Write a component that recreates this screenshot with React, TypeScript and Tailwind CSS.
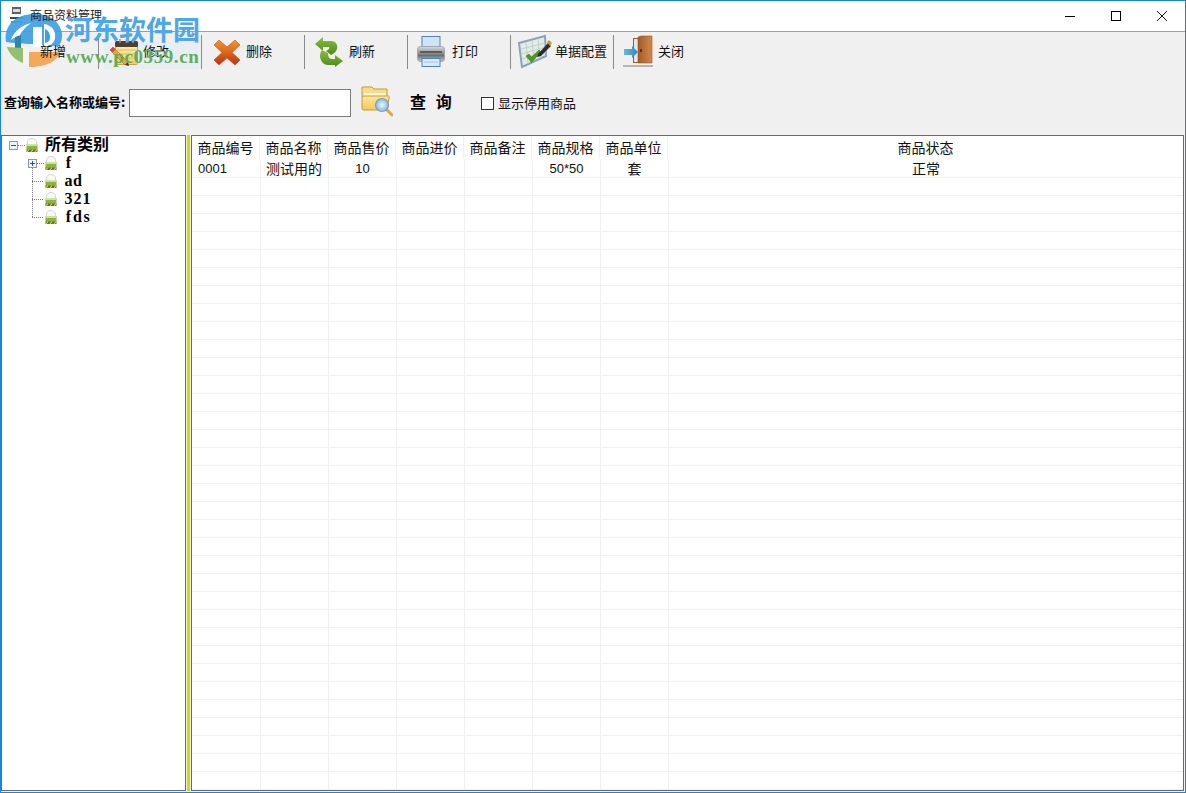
import React from "react";

const cjk = '"Noto Sans CJK SC", "Liberation Sans", sans-serif';
const digits = '"Liberation Sans", sans-serif';

function EditIcon() {
  return (
    <svg width="44" height="40" viewBox="0 0 44 40">
      <defs>
        <linearGradient id="pad" x1="0" y1="0" x2="0" y2="1">
          <stop offset="0" stopColor="#fdeeaa" />
          <stop offset="1" stopColor="#f5d272" />
        </linearGradient>
      </defs>
      <rect x="16.500" y="10.500" width="22" height="22" rx="1" fill="url(#pad)" stroke="#c9a24a" />
      <g stroke="#e2bf62" strokeWidth="1">
        <path d="M18 18H37M18 22H37M18 26H37M18 30H37" />
      </g>
      <rect x="16" y="9" width="23" height="6" rx="1.500" fill="#4a4038" />
      <path d="M21 7v4M27.500 7v4M34 7v4" stroke="#9a9286" strokeWidth="1.500" />
      <path d="M11 18l3-3 15 15-3 3z" fill="#eba53f" stroke="#a76a20" strokeWidth=".6" />
      <path d="M11 18l3-3 2.500 2.500-3 3z" fill="#d9453a" />
      <path d="M26 33l3-3 1 4z" fill="#3a3a3a" />
    </svg>
  );
}

function DeleteIcon() {
  return (
    <svg width="44" height="40" viewBox="0 0 44 40">
      <defs>
        <linearGradient id="x" x1="0" y1="0" x2="0" y2="1">
          <stop offset="0" stopColor="#f19a2c" />
          <stop offset="1" stopColor="#c1300f" />
        </linearGradient>
      </defs>
      <path
        d="M12 13l5-5 8 7 8-7 5 5-8 7.500 8 7.500-5 5-8-7-8 7-5-5 8-7.500z"
        fill="url(#x)"
        stroke="#c2481a"
        strokeWidth=".6"
        strokeLinejoin="round"
      />
    </svg>
  );
}

function RefreshIcon() {
  return (
    <svg width="44" height="40" viewBox="0 0 44 40">
      <defs>
        <linearGradient id="r" x1="0" y1="0" x2="0" y2="1">
          <stop offset="0" stopColor="#8dbd3c" />
          <stop offset="1" stopColor="#4e8a1c" />
        </linearGradient>
      </defs>
      <path d="M10 12L18 5V9H26C31 9 33 13 32 17C31 20 29 21 26 23L21 19C24 18 25 16 24 15H18V19Z" fill="url(#r)" />
      <path d="M17 18L23 21C23 24 24 27 27 27H30V23L38 29L30 35V33H23C18 33 15 28 15 24C15 21 16 19 17 18Z" fill="url(#r)" />
    </svg>
  );
}

function PrintIcon() {
  return (
    <svg width="44" height="40" viewBox="0 0 44 40">
      <defs>
        <linearGradient id="p" x1="0" y1="0" x2="0" y2="1">
          <stop offset="0" stopColor="#dcdcdc" />
          <stop offset=".45" stopColor="#8e9194" />
          <stop offset=".6" stopColor="#6d7073" />
          <stop offset="1" stopColor="#c9c9c9" />
        </linearGradient>
      </defs>
      <rect x="14" y="4.500" width="18" height="13" fill="#cfe5f7" stroke="#4f86b8" />
      <rect x="9.500" y="14.500" width="27" height="15" rx="3" fill="url(#p)" stroke="#a5a5a5" />
      <rect x="12" y="19" width="22" height="2" fill="#5b5e61" />
      <rect x="14" y="26.500" width="18" height="8" fill="#d8eafa" stroke="#4f86b8" />
      <path d="M16 30h14" stroke="#a9c9e6" />
    </svg>
  );
}

function ConfigIcon() {
  return (
    <svg width="44" height="40" viewBox="0 0 44 40">
      <path d="M8 11L34 4L35 24L11 35Z" fill="#e3ebe6" stroke="#8ba2b8" strokeWidth="2" />
      <g stroke="#bcc9c2" strokeWidth=".8">
        <path d="M10 17l24-6M10 22l25-7M11 27l24-7" />
        <path d="M15 10l2 22M21 8l2 21M27 6l2 21" />
      </g>
      <path d="M15 24l3-2 2.500 3 7.500-7 2 2-9.500 10.500z" fill="#4f9a1f" stroke="#2f7412" strokeWidth=".5" />
      <path d="M27 22l10-11 3 3-10 10-4 1z" fill="#2c2c2c" />
      <path d="M36 10l2-2 3 3-2 3z" fill="#c2a02a" />
    </svg>
  );
}

function DoorIcon() {
  return (
    <svg width="44" height="40" viewBox="0 0 44 40">
      <defs>
        <linearGradient id="d" x1="0" y1="0" x2="1" y2="0">
          <stop offset="0" stopColor="#a65a25" />
          <stop offset="1" stopColor="#d08a50" />
        </linearGradient>
        <linearGradient id="a" x1="0" y1="0" x2="1" y2="0">
          <stop offset="0" stopColor="#6cb7dc" />
          <stop offset="1" stopColor="#2f86b9" />
        </linearGradient>
      </defs>
      <rect x="19.500" y="6.500" width="6" height="24" fill="#e4e8ea" stroke="#9a5a2b" />
      <path d="M24 5l3-1h11v27H24z" fill="url(#d)" stroke="#9a5526" strokeWidth=".6" />
      <rect x="26" y="17" width="2" height="3" fill="#5a3418" />
      <path d="M10 17h8v-3l6 6-6 6v-3h-8z" fill="url(#a)" />
      <rect x="9" y="33" width="30" height="2" fill="#b8b4ae" />
    </svg>
  );
}

function FolderSearchIcon() {
  return (
    <svg width="32" height="32" viewBox="0 0 32 32">
      <defs>
        <linearGradient id="f" x1="0" y1="0" x2="0" y2="1">
          <stop offset="0" stopColor="#fde79b" />
          <stop offset="1" stopColor="#f3c75f" />
        </linearGradient>
        <radialGradient id="g">
          <stop offset="0" stopColor="#eaf6fd" />
          <stop offset="1" stopColor="#7dbbe6" />
        </radialGradient>
      </defs>
      <path d="M1 2h10l2 2h13v8H1z" fill="#f8dc88" stroke="#c99a3c" />
      <path d="M3 8h22v4H3z" fill="#fff8dc" />
      <path d="M1 24V13c0-1 1-2 2-2h24c1 0 2 1 1 2l-2 12H2z" fill="url(#f)" stroke="#c99a3c" />
      <path d="M26 25l5 5" stroke="#e8a33c" strokeWidth="3" strokeLinecap="round" />
      <circle cx="21" cy="20" r="6.500" fill="url(#g)" stroke="#8a9aa6" strokeWidth="1.200" />
    </svg>
  );
}

function TreeGlyph({ x }: { x: number }) {
  return (
    <g transform={`translate(${x} 2)`}>
      <path d="M1.500 7V4c0-2 2-3.500 4.500-3.500S10.500 2 10.500 4v3" fill="#fafafa" stroke="#d4d4d4" />
      <rect x="0.500" y="6" width="11" height="6" fill="#86b83f" />
      <rect x="0.500" y="6" width="11" height="2" fill="#cfe29a" />
      <rect x="0.500" y="11.500" width="11" height="2.500" fill="#6b6a28" />
      <path d="M1 14l2-2.500M5 14l2-2.500M9 14l2-2.500" stroke="#e2d24f" strokeWidth="1.200" />
    </g>
  );
}

function BoxMark({ x, y, plus }: { x: number; y: number; plus?: boolean }) {
  return (
    <g>
      <rect x={x + 0.5} y={y + 0.5} width="8" height="8" fill="#f2f4f6" stroke="#8a9aa8" />
      <path d={`M${x + 2} ${y + 4.5}h5`} stroke="#32508a" />
      {plus && <path d={`M${x + 4.5} ${y + 2}v5`} stroke="#32508a" />}
    </g>
  );
}

function TreeRoot() {
  return (
    <div className="flex h-[18px] items-center">
      <svg width="43" height="18" viewBox="0 0 43 18" className="shrink-0">
        <BoxMark x={7} y={5} />
        <path d="M16 9.500h8" stroke="#777" strokeDasharray="1 1" />
        <TreeGlyph x={24} />
      </svg>
      <span className="mb-[4px] text-[16px] leading-none font-bold text-black" style={{ fontFamily: cjk }}>
        所有类别
      </span>
    </div>
  );
}

function TreeChild({ label, first, last }: { label: string; first?: boolean; last?: boolean }) {
  const vertical = first ? "M30.500 14V18" : last ? "M30.500 0V9.500" : "M30.500 0V18";
  return (
    <div className="flex h-[18px] items-center">
      <svg width="62" height="18" viewBox="0 0 62 18" className="shrink-0">
        <path d={vertical} stroke="#777" strokeDasharray="1 1" />
        <path d={first ? "M35 9.500h7" : "M30 9.500h12"} stroke="#777" strokeDasharray="1 1" />
        {first && <BoxMark x={26} y={5} plus />}
        <TreeGlyph x={43} />
      </svg>
      <span className="flex text-[16px] leading-none font-bold text-black" style={{ fontFamily: '"Liberation Serif", serif' }}>
        {label.split("").map((ch, i) => (
          <span key={i} className="w-[9px] text-center">
            {ch}
          </span>
        ))}
      </span>
    </div>
  );
}

const toolbar: { label: string; icon: React.ReactNode }[] = [
  { label: "修改", icon: <EditIcon /> },
  { label: "删除", icon: <DeleteIcon /> },
  { label: "刷新", icon: <RefreshIcon /> },
  { label: "打印", icon: <PrintIcon /> },
  { label: "单据配置", icon: <ConfigIcon /> },
  { label: "关闭", icon: <DoorIcon /> },
];

const headers = ["商品编号", "商品名称", "商品售价", "商品进价", "商品备注", "商品规格", "商品单位"];

function Cell({ children, align, font }: { children?: React.ReactNode; align?: string; font?: string }) {
  return (
    <div
      className={`flex h-full w-[68px] shrink-0 items-center border-r border-[#f0f0f0] text-[14px] leading-none text-[#111] first:w-[69px] ${align ?? "justify-center"}`}
      style={{ fontFamily: font ?? cjk }}
    >
      {children}
    </div>
  );
}

function BlankRow() {
  return (
    <div className="flex h-[18px] shrink-0 border-b border-[#f0f0f0]">
      {[0, 1, 2, 3, 4, 5, 6].map((c) => (
        <Cell key={c} />
      ))}
      <div className="flex-1" />
    </div>
  );
}

export default function App() {
  return (
    <div
      className="relative flex h-[793px] w-[1186px] flex-col overflow-hidden border border-[#1b86d8] bg-[#f0f0f0] text-black"
      style={{ fontFamily: cjk }}
    >
      {/* title bar */}
      <div className="flex h-[31px] shrink-0 items-center border-b border-[#a0a0a0] bg-white">
        <svg width="14" height="18" viewBox="0 0 14 18" className="ml-[9px]">
          <rect x="2" y="0" width="9" height="7" fill="#5a6168" />
          <rect x="3" y="2" width="7" height="3" fill="#d7dde2" />
          <rect x="0" y="10" width="13" height="2" fill="#3f464c" />
          <rect x="1" y="14" width="12" height="2" fill="#7b8288" />
        </svg>
        <span className="relative z-10 mb-[2px] ml-[6px] text-[12px] leading-none text-[#222]">商品资料管理</span>
        <div className="ml-auto flex h-full">
          <div className="flex h-full w-[46px] items-center justify-center">
            <div className="h-px w-[10px] bg-black" />
          </div>
          <div className="flex h-full w-[46px] items-center justify-center">
            <div className="h-[10px] w-[10px] border border-black" />
          </div>
          <div className="flex h-full w-[46px] items-center justify-center">
            <svg width="10" height="10" viewBox="0 0 10 10">
              <path d="M0 0l10 10M10 0L0 10" stroke="#111" fill="none" />
            </svg>
          </div>
        </div>
      </div>

      {/* toolbar */}
      <div className="flex h-[40px] shrink-0 items-center">
        <div className="flex h-full w-[97px] shrink-0 items-center pl-[39px] text-[13px] text-[#111]">
          <span className="relative z-10 mb-[4px] leading-none whitespace-nowrap">新增</span>
        </div>
        {toolbar.map((t) => (
          <React.Fragment key={t.label}>
            <div className="h-[34px] w-px shrink-0 self-center bg-[#8a8a8a]" />
            <div className="relative flex h-full w-[102px] shrink-0 items-center text-[13px] text-[#111]">
              {t.label === "修改" && <div className="absolute top-[10px] left-[5px] h-[27px] w-[95px] bg-[#e6edf3]" />}
              <div className="relative z-10 flex h-[40px] w-[44px] shrink-0">{t.icon}</div>
              <span className="relative z-10 mb-[4px] leading-none whitespace-nowrap">{t.label}</span>
            </div>
          </React.Fragment>
        ))}
      </div>

      {/* search */}
      <div className="flex h-[63px] shrink-0 items-start pt-[14px] pl-[3px]">
        <div className="flex h-[34px] items-center">
          <span className="mb-[4px] w-[125px] shrink-0 text-[13px] leading-none font-bold whitespace-nowrap">查询输入名称或编号:</span>
          <div className="h-[28px] w-[222px] shrink-0 border border-[#7a7a7a] bg-white" />
          <div className="-mt-[4px] ml-[10px] flex h-[32px] w-[32px] shrink-0">
            <FolderSearchIcon />
          </div>
          <span className="mb-[4px] ml-[17px] w-[71px] shrink-0 text-[16px] leading-none font-bold [word-spacing:6px]">查 询</span>
          <div className="h-[13px] w-[13px] shrink-0 border border-[#333] bg-white" />
          <span className="mb-[2px] ml-[4px] text-[13px] leading-none whitespace-nowrap text-[#111]">显示停用商品</span>
        </div>
      </div>

      {/* main */}
      <div className="flex h-[656px] shrink-0">
        <div className="h-full w-[185px] shrink-0 border border-[#6a6a6a] bg-white">
          <TreeRoot />
          <TreeChild label="f" first />
          <TreeChild label="ad" />
          <TreeChild label="321" />
          <TreeChild label="fds" last />
        </div>
        <div className="flex h-full w-[5px] shrink-0 justify-center">
          <div className="h-full w-[3px] bg-[#d9d900]" />
        </div>
        <div className="flex h-full w-[993px] shrink-0 flex-col overflow-hidden border border-[#6a6a6a] bg-white">
          <div className="flex h-[23px] shrink-0">
            {headers.map((h) => (
              <div
                key={h}
                className="flex h-full w-[68px] shrink-0 items-center justify-center border-r border-[#f0f0f0] pb-[2px] text-[14px] leading-none text-[#111]"
              >
                {h}
              </div>
            ))}
            <div className="flex flex-1 items-center justify-center pb-[2px] text-[14px] leading-none text-[#111]">商品状态</div>
          </div>
          <div className="flex h-[19px] shrink-0 border-b border-[#f0f0f0]">
            <Cell align="justify-start pl-[6px]" font={digits}>
              <span className="text-[13px]">0001</span>
            </Cell>
            <Cell align="justify-start pl-[5px]">测试用的</Cell>
            <Cell font={digits}>
              <span className="text-[13px]">10</span>
            </Cell>
            <Cell />
            <Cell />
            <Cell font={digits}>
              <span className="text-[13px]">50*50</span>
            </Cell>
            <Cell>套</Cell>
            <div className="flex flex-1 items-center justify-center text-[14px] leading-none text-[#111]">正常</div>
          </div>
          {Array.from({ length: 34 }).map((_, i) => (
            <BlankRow key={i} />
          ))}
        </div>
      </div>

      {/* watermark overlay */}
      <svg width="70" height="70" viewBox="0 0 70 70" className="pointer-events-none absolute -top-px -left-px">
        <path d="M6 42C4 30 10 20 22 16c13-4 29-2 36 8 6 8 5 17 0 23-8-3-40-3-52-5z" fill="#3f9fe2" opacity=".92" />
        <path d="M11 40C14 31 22 25 31 23c-6 4-10 9-12 14-3 0-6 1-8 3z" fill="#ffffff" />
        <path d="M33 27h9v20h-9z" fill="#ffffff" />
        <path d="M44 24c8 1 12 7 11 14-1 5-4 8-11 9z" fill="#ffffff" />
        <path d="M45 29c3 1 5 4 5 8s-2 5-5 6z" fill="#3f9fe2" />
        <path d="M15 37l6-2v13h-6z" fill="#2a87ab" />
        <path d="M7 47c2 7 8 13 16 16V48z" fill="#93c06d" />
        <path d="M23 47h6v19h-6z" fill="#f4f4ee" />
        <path d="M29 52h31c-2 8-12 15-31 15z" fill="#f6a85a" />
      </svg>
      <div className="pointer-events-none absolute top-[13px] left-[64px] z-20 text-[27px] leading-[30px] font-bold whitespace-nowrap text-[#4fa6e8]">
        河东软件园
      </div>
      <div
        className="pointer-events-none absolute top-[45px] left-[65px] z-20 text-[19px] leading-[22px] font-bold tracking-[0.6px] whitespace-nowrap text-[#62ad5c]"
        style={{ fontFamily: '"Liberation Serif", serif' }}
      >
        www.pc0359.cn
      </div>
    </div>
  );
}
